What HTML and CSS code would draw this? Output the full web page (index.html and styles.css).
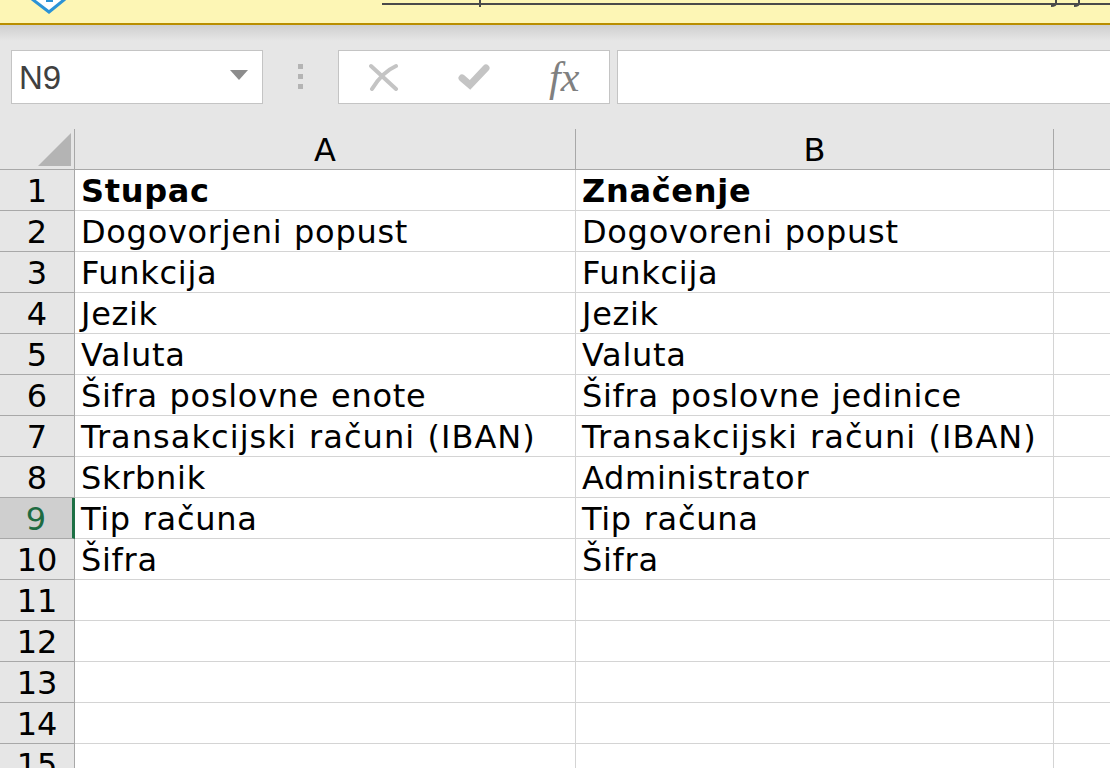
FILE: index.html
```html
<!DOCTYPE html>
<html lang="en">
<head>
    <meta charset="UTF-8">
    <title>Stupac</title>
    <link rel="stylesheet" href="styles.css">
</head>
<body>
    <div class="banner">
        <svg class="shield" width="40" height="15" viewBox="0 0 40 15">
            <path d="M3 -1 L20 12 L36 -1" fill="#fff" stroke="#2b93d6" stroke-width="3"/>
            <rect x="17" y="0" width="7" height="2" fill="#2b93d6"/>
        </svg>
        <svg class="banner-line" width="728" height="7" viewBox="0 0 728 7">
            <rect x="0" y="3" width="728" height="2" fill="#4a4a4a"/>
            <rect x="97" y="0" width="2" height="7" fill="#4a4a4a"/>
            <path d="M674 0 V3 Q674 6 669 6 M697 0 V3 Q697 6 692 6" fill="none" stroke="#4a4a4a" stroke-width="2"/>
        </svg>
    </div>
    <div class="toolbar">
        <div class="name-box">
            <span>N9</span>
            <i class="arrow"></i>
        </div>
        <div class="grip"><i></i><i></i><i></i></div>
        <div class="fx-buttons">
            <svg class="icon-cancel" width="30" height="28" viewBox="0 0 30 28"><path d="M2 3 L27 26 M27 3 C18 7 9 16 3 26" fill="none" stroke="#c4c4c4" stroke-width="4" stroke-linecap="round"/></svg>
            <svg class="icon-ok" width="32" height="28" viewBox="0 0 32 28"><path d="M4 15 L12 22 L28 5" fill="none" stroke="#c4c4c4" stroke-width="7" stroke-linecap="round"/></svg>
            <span class="fx">fx</span>
        </div>
        <div class="formula"></div>
    </div>
    <div class="sheet">
        <div class="corner"><i></i></div>
        <div class="col-head">A</div>
        <div class="col-head">B</div>
        <div class="col-head"></div>

        <div class="row-head">1</div><div class="cell bold">Stupac</div><div class="cell bold">Značenje</div><div class="cell"></div>
        <div class="row-head">2</div><div class="cell">Dogovorjeni popust</div><div class="cell">Dogovoreni popust</div><div class="cell"></div>
        <div class="row-head">3</div><div class="cell">Funkcija</div><div class="cell">Funkcija</div><div class="cell"></div>
        <div class="row-head">4</div><div class="cell">Jezik</div><div class="cell">Jezik</div><div class="cell"></div>
        <div class="row-head">5</div><div class="cell">Valuta</div><div class="cell">Valuta</div><div class="cell"></div>
        <div class="row-head">6</div><div class="cell">Šifra poslovne enote</div><div class="cell">Šifra poslovne jedinice</div><div class="cell"></div>
        <div class="row-head">7</div><div class="cell wide">Transakcijski računi (IBAN)</div><div class="cell wide">Transakcijski računi (IBAN)</div><div class="cell"></div>
        <div class="row-head">8</div><div class="cell">Skrbnik</div><div class="cell">Administrator</div><div class="cell"></div>
        <div class="row-head active">9</div><div class="cell">Tip računa</div><div class="cell">Tip računa</div><div class="cell"></div>
        <div class="row-head">10</div><div class="cell">Šifra</div><div class="cell">Šifra</div><div class="cell"></div>
        <div class="row-head">11</div><div class="cell"></div><div class="cell"></div><div class="cell"></div>
        <div class="row-head">12</div><div class="cell"></div><div class="cell"></div><div class="cell"></div>
        <div class="row-head">13</div><div class="cell"></div><div class="cell"></div><div class="cell"></div>
        <div class="row-head">14</div><div class="cell"></div><div class="cell"></div><div class="cell"></div>
        <div class="row-head">15</div><div class="cell"></div><div class="cell"></div><div class="cell"></div>
    </div>
</body>
</html>
```

FILE: styles.css
```css
html, body {
    margin: 0;
    height: 768px;
    overflow: hidden;
}
body {
    font-family: "DejaVu Sans", sans-serif;
    background-color: #e6e6e6;
    color: #000;
}
.banner {
    height: 23px;
    background-color: #fdf6b5;
    border-bottom: 2px solid #b98e00;
    display: flex;
    align-items: flex-start;
}
.shield {
    margin-left: 29px;
    flex: none;
}
.banner-line {
    margin-left: 313px;
    flex: none;
}
.toolbar {
    height: 79px;
    padding-top: 25px;
    display: flex;
    align-items: flex-start;
    background: linear-gradient(#cfcfcf, #e6e6e6 16px);
}
.name-box {
    margin-left: 11px;
    width: 229px;
    height: 52px;
    background-color: #fff;
    border: 1px solid #c4c4c4;
    display: flex;
    align-items: center;
    justify-content: space-between;
    padding: 0 14px 0 7px;
    font-family: "Liberation Sans", sans-serif;
    font-size: 33px;
    color: #404040;
}
.name-box span {
    padding-top: 2px;
}
.arrow {
    border-left: 9px solid transparent;
    border-right: 9px solid transparent;
    border-top: 10px solid #8c8c8c;
    margin-bottom: 4px;
}
.grip {
    width: 75px;
    display: flex;
    flex-direction: column;
    align-items: center;
    gap: 5px;
    padding-top: 14px;
}
.grip i {
    width: 5px;
    height: 5px;
    background-color: #b4b4b4;
}
.fx-buttons {
    width: 270px;
    height: 52px;
    background-color: #fff;
    border: 1px solid #c4c4c4;
    display: flex;
    align-items: center;
}
.icon-cancel {
    margin-left: 30px;
}
.icon-ok {
    margin-left: 59px;
}
.fx {
    margin-left: 59px;
    font-family: "Liberation Serif", serif;
    font-style: italic;
    font-size: 42px;
    color: #808080;
}
.formula {
    margin-left: 7px;
    flex: 1;
    height: 52px;
    background-color: #fff;
    border: 1px solid #c4c4c4;
    border-right: none;
}
.sheet {
    display: grid;
    grid-template-columns: 75px 501px 478px 57px;
    grid-auto-rows: 41px;
    background-color: #fff;
    font-size: 32px;
}
.sheet > .col-head, .sheet > .corner {
    background-color: #e6e6e6;
}
.corner {
    border-right: 1px solid #a8a8a8;
    border-bottom: 1px solid #a8a8a8;
    box-sizing: border-box;
    position: relative;
}
.corner i {
    position: absolute;
    right: 3px;
    bottom: 3px;
    border-left: 33px solid transparent;
    border-bottom: 33px solid #b4b4b4;
}
.col-head {
    border-right: 1px solid #a8a8a8;
    border-bottom: 1px solid #a8a8a8;
    box-sizing: border-box;
    text-align: center;
    line-height: 42px;
}
.row-head {
    background-color: #e6e6e6;
    border-right: 1px solid #a8a8a8;
    border-bottom: 1px solid #a8a8a8;
    box-sizing: border-box;
    text-align: center;
    line-height: 42px;
}
.row-head.active {
    background-color: #cfcfcf;
    color: #1e6b41;
    border-right: 3px solid #1e7145;
}
.cell {
    border-right: 1px solid #d4d4d4;
    border-bottom: 1px solid #d4d4d4;
    box-sizing: border-box;
    padding-left: 6px;
    line-height: 42px;
    letter-spacing: 0.7px;
    word-spacing: 1px;
    white-space: nowrap;
}
.bold {
    font-weight: bold;
}
.wide {
    letter-spacing: 1.05px;
}
```
